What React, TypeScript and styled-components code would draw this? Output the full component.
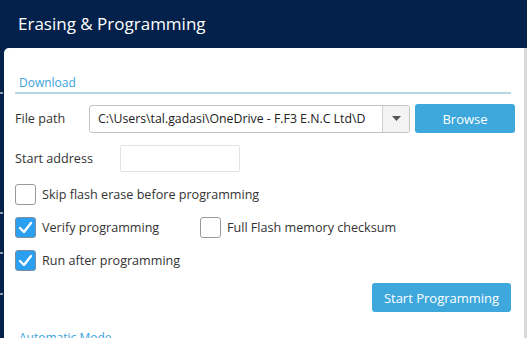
import React from "react";
import styled, { createGlobalStyle } from "styled-components";

const GlobalStyle = createGlobalStyle`
  html, body {
    margin: 0;
    padding: 0;
    background: #03214a;
  }
  body {
    font-family: "Open Sans", "Noto Sans", sans-serif;
  }
`;

const Check = () => (
  <svg width="15" height="13" viewBox="0 0 15 13">
    <path
      d="M2 7 L6 11 L13 2"
      fill="none"
      stroke="#fff"
      strokeWidth="2.4"
      strokeLinecap="round"
      strokeLinejoin="round"
    />
  </svg>
);

const Caret = () => (
  <svg width="9" height="5" viewBox="0 0 9 5">
    <path d="M0 0 H9 L4.5 5 Z" fill="#555" />
  </svg>
);

const CheckItem = ({ label, checked }: { label: string; checked?: boolean }) => (
  <CheckLabel>
    <Box $checked={checked}>{checked && <Check />}</Box>
    {label}
  </CheckLabel>
);

const App = () => {
  return (
    <Page>
      <GlobalStyle />
      <Header>Erasing &amp; Programming</Header>
      <Body>
        <Rail>
          <Tick $gap={44} />
          <Tick $gap={118} />
          <Tick $gap={38} />
          <Tick $gap={39} />
        </Rail>
        <Panel>
          <SectionTitle>Download</SectionTitle>
          <Form>
            <Row>
              <Label $width={74}>File path</Label>
              <Combo>
                <ComboText>C:\Users\tal.gadasi\OneDrive - F.F3 E.N.C Ltd\D</ComboText>
                <ComboButton>
                  <Caret />
                </ComboButton>
              </Combo>
              <Button $width={100}>Browse</Button>
            </Row>
            <Row>
              <Label $width={105}>Start address</Label>
              <TextInput />
            </Row>
            <CheckItem label="Skip flash erase before programming" />
            <Row>
              <Column $width={185}>
                <CheckItem label="Verify programming" checked />
              </Column>
              <CheckItem label="Full Flash memory checksum" />
            </Row>
            <CheckItem label="Run after programming" checked />
            <Actions>
              <Button $width={139}>Start Programming</Button>
            </Actions>
          </Form>
          <SectionTitle>Automatic Mode</SectionTitle>
        </Panel>
      </Body>
    </Page>
  );
};

export default App;

const Page = styled.div`
  width: 527px;
  height: 338px;
  display: flex;
  flex-direction: column;
  overflow: hidden;
  background: #03214a;
`;

const Header = styled.div`
  height: 48px;
  flex-shrink: 0;
  display: flex;
  align-items: center;
  padding: 0 0 2px 18px;
  box-sizing: border-box;
  color: #ffffff;
  font-size: 17px;
`;

const Body = styled.div`
  flex: 1;
  display: flex;
  min-height: 0;
`;

const Rail = styled.div`
  width: 4px;
  flex-shrink: 0;
  display: flex;
  flex-direction: column;
`;

const Tick = styled.div<{ $gap: number }>`
  margin-top: ${({ $gap }) => $gap}px;
  width: 3px;
  height: 2px;
  background: #8d9bb0;
`;

const Panel = styled.div`
  flex: 1;
  background: #ffffff;
  border-top-left-radius: 5px;
  border-right: 3px solid #dadada;
  padding: 27px 13px 0 11px;
  display: flex;
  flex-direction: column;
  overflow: hidden;
`;

const SectionTitle = styled.div`
  color: #3aa3dc;
  font-size: 12px;
  line-height: 16px;
  padding: 0 0 1px 4px;
  border-bottom: 2px solid #b6d6e2;
`;

const Form = styled.div`
  display: flex;
  flex-direction: column;
  align-items: flex-start;
  gap: 12px;
  padding: 10px 0 18px;
  color: #333333;
  font-size: 12.6px;
`;

const Row = styled.div`
  display: flex;
  align-items: center;
`;

const Label = styled.div<{ $width: number }>`
  width: ${({ $width }) => $width}px;
`;

const Column = styled.div<{ $width: number }>`
  width: ${({ $width }) => $width}px;
`;

const Combo = styled.div`
  width: 321px;
  height: 28px;
  box-sizing: border-box;
  border: 1px solid #c4c4c4;
  border-radius: 3px;
  display: flex;
  margin-right: 5px;
  overflow: hidden;
`;

const ComboText = styled.div`
  flex: 1;
  min-width: 0;
  padding: 0 4px 0 8px;
  line-height: 26px;
  font-size: 12.3px;
  white-space: nowrap;
  overflow: hidden;
  color: #222;
`;

const ComboButton = styled.div`
  width: 26px;
  flex-shrink: 0;
  border-left: 1px solid #d0d0d0;
  background: #f3f3f3;
  display: flex;
  align-items: center;
  justify-content: center;
`;

const TextInput = styled.div`
  width: 120px;
  height: 27px;
  box-sizing: border-box;
  border: 1px solid #e2e2e2;
  border-radius: 2px;
`;

const Button = styled.div<{ $width: number }>`
  width: ${({ $width }) => $width}px;
  height: 29px;
  background: #3ea8dc;
  border-radius: 3px;
  color: #ffffff;
  font-size: 13px;
  display: flex;
  align-items: center;
  justify-content: center;
`;

const CheckLabel = styled.label`
  display: flex;
  align-items: center;
  gap: 6px;
  height: 21px;
`;

const Box = styled.span<{ $checked?: boolean }>`
  width: 21px;
  height: 21px;
  box-sizing: border-box;
  border-radius: 3px;
  border: 1px solid ${({ $checked }) => ($checked ? "#7d8ea0" : "#9a9a9a")};
  background: ${({ $checked }) => ($checked ? "#2b9ff0" : "#ffffff")};
  display: flex;
  align-items: center;
  justify-content: center;
`;

const Actions = styled.div`
  align-self: stretch;
  display: flex;
  justify-content: flex-end;
`;
